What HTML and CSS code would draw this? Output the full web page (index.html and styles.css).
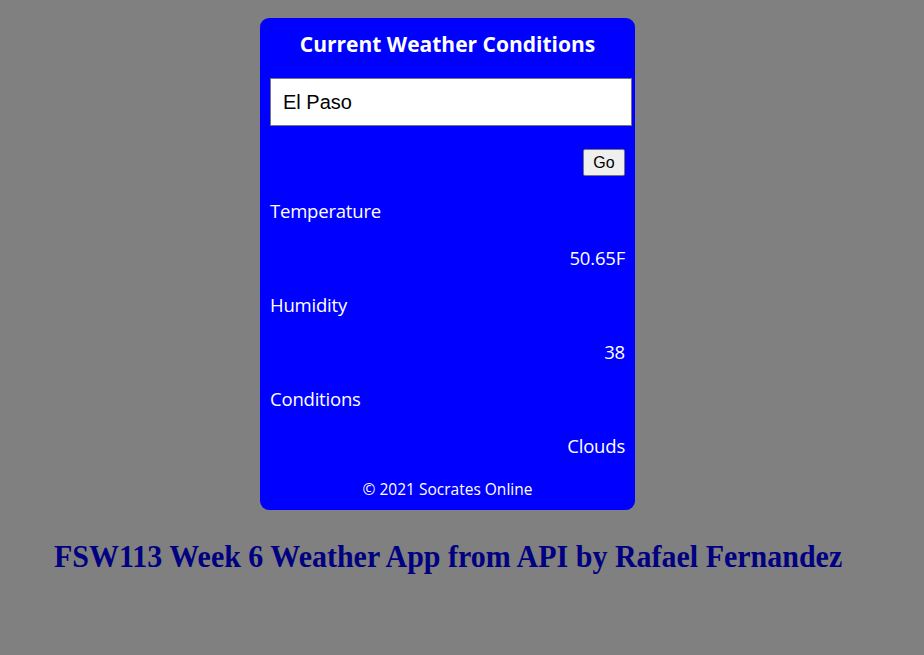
FILE: index.html
```html
<!DOCTYPE html>
<html lang="en">
<head>
<meta charset="utf-8">
<title>Weather App</title>
<link rel="stylesheet" href="styles.css">
</head>
<body>
<div class="page">
  <main class="card">
    <h2 class="card-title">Current Weather Conditions</h2>
    <input class="city" type="text" value="El Paso">
    <div class="go-row"><button class="go" type="button">Go</button></div>
    <div class="label">Temperature</div>
    <div class="value">50.65F</div>
    <div class="label">Humidity</div>
    <div class="value">38</div>
    <div class="label">Conditions</div>
    <div class="value">Clouds</div>
    <footer class="footer">© 2021 Socrates Online</footer>
  </main>
  <h1 class="banner">FSW113 Week 6 Weather App from API by Rafael Fernandez</h1>
</div>
</body>
</html>
```
FILE: styles.css
```css
html, body {
  margin: 0;
  padding: 0;
  background: #808080;
}
.page {
  padding-top: 18px;
}
.card {
  box-sizing: border-box;
  width: 375px;
  margin-left: 260px;
  height: 492px;
  background: #0000ff;
  border-radius: 9px;
  padding: 0 10px;
  color: #ffffff;
  font-family: "Open Sans", sans-serif;
  display: flex;
  flex-direction: column;
}
.card-title {
  margin: 0;
  padding-top: 12px;
  height: 48px;
  box-sizing: border-box;
  text-align: center;
  font-size: 21px;
  font-weight: 700;
  letter-spacing: 0;
}
.city {
  box-sizing: border-box;
  width: 362px;
  height: 48px;
  margin: 12px 0 0 0;
  padding: 0 12px;
  border: 1px solid #767676;
  border-radius: 0;
  background: #fff;
  font-family: "Liberation Sans", Arial, sans-serif;
  font-size: 20px;
  color: #000;
}
.go-row {
  display: flex;
  justify-content: flex-end;
  margin-top: 23px;
  height: 27px;
}
.go {
  box-sizing: border-box;
  height: 27px;
  width: 42px;
  padding: 0;
  border: 1px solid #767676;
  border-radius: 2px;
  background: #efefef;
  font-family: "Liberation Sans", Arial, sans-serif;
  font-size: 16px;
  color: #000;
}
.label, .value {
  font-size: 18.5px;
  line-height: 24px;
  height: 47px;
  display: flex;
  align-items: center;
  letter-spacing: -0.2px;
}
.value {
  justify-content: flex-end;
}
.go-row + .label {
  margin-top: 11px;
}
.footer {
  text-align: center;
  font-size: 15.5px;
  letter-spacing: 0;
  margin-top: auto;
  padding-bottom: 10px;
}
.banner {
  margin: 28px 0 0 54px;
  font-family: "Liberation Serif", "Times New Roman", serif;
  font-size: 32px;
  font-weight: 700;
  color: #000080;
  transform: scaleX(0.937);
  transform-origin: left center;
}
```
